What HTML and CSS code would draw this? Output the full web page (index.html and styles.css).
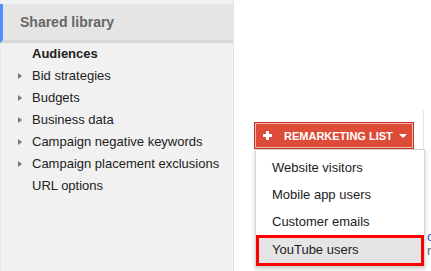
FILE: index.html
```html
<!DOCTYPE html>
<html lang="en">
<head>
    <meta charset="UTF-8">
    <meta name="viewport" content="width=device-width, initial-scale=1.0">
    <title>Shared library - Audiences</title>
    <link rel="stylesheet" href="styles.css">
</head>
<body>

    <!-- Sidebar -->
    <aside class="sidebar">
        <div class="side-head">Shared library</div>
        <ul class="side-list">
            <li class="active">Audiences</li>
            <li class="has-kids">Bid strategies</li>
            <li class="has-kids">Budgets</li>
            <li class="has-kids">Business data</li>
            <li class="has-kids">Campaign negative keywords</li>
            <li class="has-kids">Campaign placement exclusions</li>
            <li>URL options</li>
        </ul>
    </aside>

    <!-- Main -->
    <main class="main">
        <div class="toolbar">
            <div class="menu-wrap">
                <button class="btn-red">
                    <svg class="plus" width="9" height="9" viewBox="0 0 9 9"><path d="M3 0h3v3h3v3H6v3H3V6H0V3h3z" fill="#fff"/></svg>
                    <span class="btn-label">REMARKETING LIST</span>
                    <svg class="caret" width="8" height="4" viewBox="0 0 8 4"><path d="M0 0h8L4 4z" fill="#fff"/></svg>
                </button>
                <ul class="dropdown">
                    <li>Website visitors</li>
                    <li>Mobile app users</li>
                    <li>Customer emails</li>
                    <li class="picked">YouTube users</li>
                </ul>
            </div>
            <div class="divider"></div>
        </div>
        <div class="table-peek">
            <span class="peek-link">o</span>
            <span class="peek-text">ra</span>
        </div>
    </main>

</body>
</html>
```
FILE: styles.css
```css
/* Page */
html, body { margin: 0; padding: 0; height: 100%; }
body { display: flex; font-family: "Liberation Sans", Arial, sans-serif; font-size: 13px; color: #222; background: #fff; overflow: hidden; }

/* Sidebar */
.sidebar { width: 234px; flex-shrink: 0; background: #f1f1f1; border-right: 1px solid #e3e3e3; border-left: 1px solid #e8e8e8; padding-top: 4px; box-sizing: border-box; }
.side-head { height: 36px; line-height: 36px; background: #e5e5e5; border-left: 3px solid #4d90fe; margin-left: -1px; border-bottom: 3px solid #d9d9d9; padding-left: 17px; font-size: 14px; font-weight: bold; color: #666; }
.side-list { list-style: none; margin: 0; padding: 0; }
.side-list li { height: 22px; line-height: 22px; padding-left: 31px; position: relative; white-space: nowrap; }
.side-list li.active { font-weight: bold; }
.side-list li.has-kids::before { content: ""; position: absolute; left: 17px; top: 8px; border-left: 4px solid #777; border-top: 3.5px solid transparent; border-bottom: 3.5px solid transparent; }

/* Main */
.main { flex-grow: 1; position: relative; }
.toolbar { display: flex; align-items: flex-start; padding: 122px 0 0 20px; }
.divider { position: absolute; left: 189px; top: 110px; height: 40px; border-left: 1px solid #e5e5e5; }
.menu-wrap { position: relative; }

.btn-red { display: flex; align-items: center; width: 160px; height: 27px; padding: 0 0 0 8px; background: #dd4b39; border: 1px solid #c23321; box-shadow: inset 0 0 0 1px #f3b7ae; color: #fff; font-family: "Liberation Sans", Arial, sans-serif; font-size: 11px; font-weight: bold; cursor: pointer; box-sizing: border-box; }
.btn-red .btn-label { margin-left: 12px; }
.btn-red .caret { margin-left: 6px; }

.dropdown { position: absolute; top: 27px; left: 1px; width: 170px; margin: 0; padding: 4px 0 0; list-style: none; background: #fff; border: 1px solid #d6d6d6; box-shadow: 0 2px 4px rgba(0,0,0,.2); box-sizing: border-box; z-index: 2; }
.dropdown li { height: 27px; line-height: 27px; padding-left: 16px; white-space: nowrap; }
.dropdown li.picked { background: #e5e5e5; outline: 3px solid #f00; outline-offset: -3px; height: 31px; line-height: 30px; }

.table-peek { position: absolute; left: 193px; top: 230px; font-size: 13px; line-height: 14px; }
.peek-link { display: block; color: #15c; }
.peek-text { display: block; color: #666; }
```
